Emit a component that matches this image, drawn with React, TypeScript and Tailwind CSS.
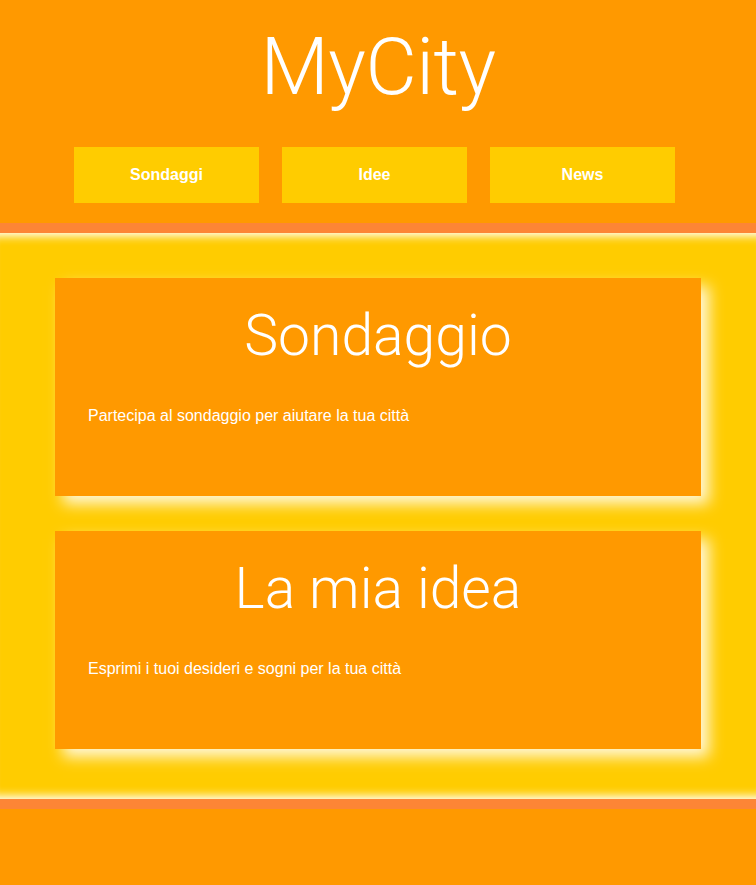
import React from 'react';

const navItems = ['Sondaggi', 'Idee', 'News'];

const cards = [
    { title: 'Sondaggio', text: 'Partecipa al sondaggio per aiutare la tua città' },
    { title: 'La mia idea', text: 'Esprimi i tuoi desideri e sogni per la tua città' },
];

const App: React.FC = () => {
    return (
        <div className="min-h-screen bg-[#ff9900] font-['Liberation_Sans',Arial,sans-serif] text-white">
            {/* Header */}
            <header className="h-[233px] border-b-[10px] border-[#fd8535] bg-[#ff9900] pt-[27px]">
                <h1 className="h-[80px] text-center font-['Roboto',sans-serif] text-[79px] font-light leading-[80px] tracking-[-0.5px]">
                    MyCity
                </h1>
                <nav className="mt-[40px] flex gap-[23px] pl-[74px]">
                    {navItems.map((item) => (
                        <a
                            key={item}
                            href="#"
                            className="flex h-[56px] w-[185px] items-center justify-center bg-[#ffcc00] text-[16px] font-bold"
                        >
                            {item}
                        </a>
                    ))}
                </nav>
            </header>

            {/* Main content */}
            <main className="flex h-[566px] flex-col gap-[35px] bg-[#ffcc00] px-[55px] pt-[45px] shadow-[inset_0_12px_10px_-9px_#fff,inset_0_-12px_10px_-9px_#fff]">
                {cards.map((card) => (
                    <section
                        key={card.title}
                        className="h-[218px] w-[646px] bg-[#ff9900] px-[33px] pt-[30px] shadow-[8px_8px_14px_rgba(255,255,255,0.85)]"
                    >
                        <h2 className="h-[56px] text-center font-['Roboto',sans-serif] text-[57px] font-light leading-[56px]">
                            {card.title}
                        </h2>
                        <p className="mt-[41px] text-[16px] leading-[22px]">{card.text}</p>
                    </section>
                ))}
            </main>

            {/* Footer */}
            <footer className="h-[86px] border-t-[10px] border-[#fd8535] bg-[#ff9900]" />
        </div>
    );
};

export default App;
